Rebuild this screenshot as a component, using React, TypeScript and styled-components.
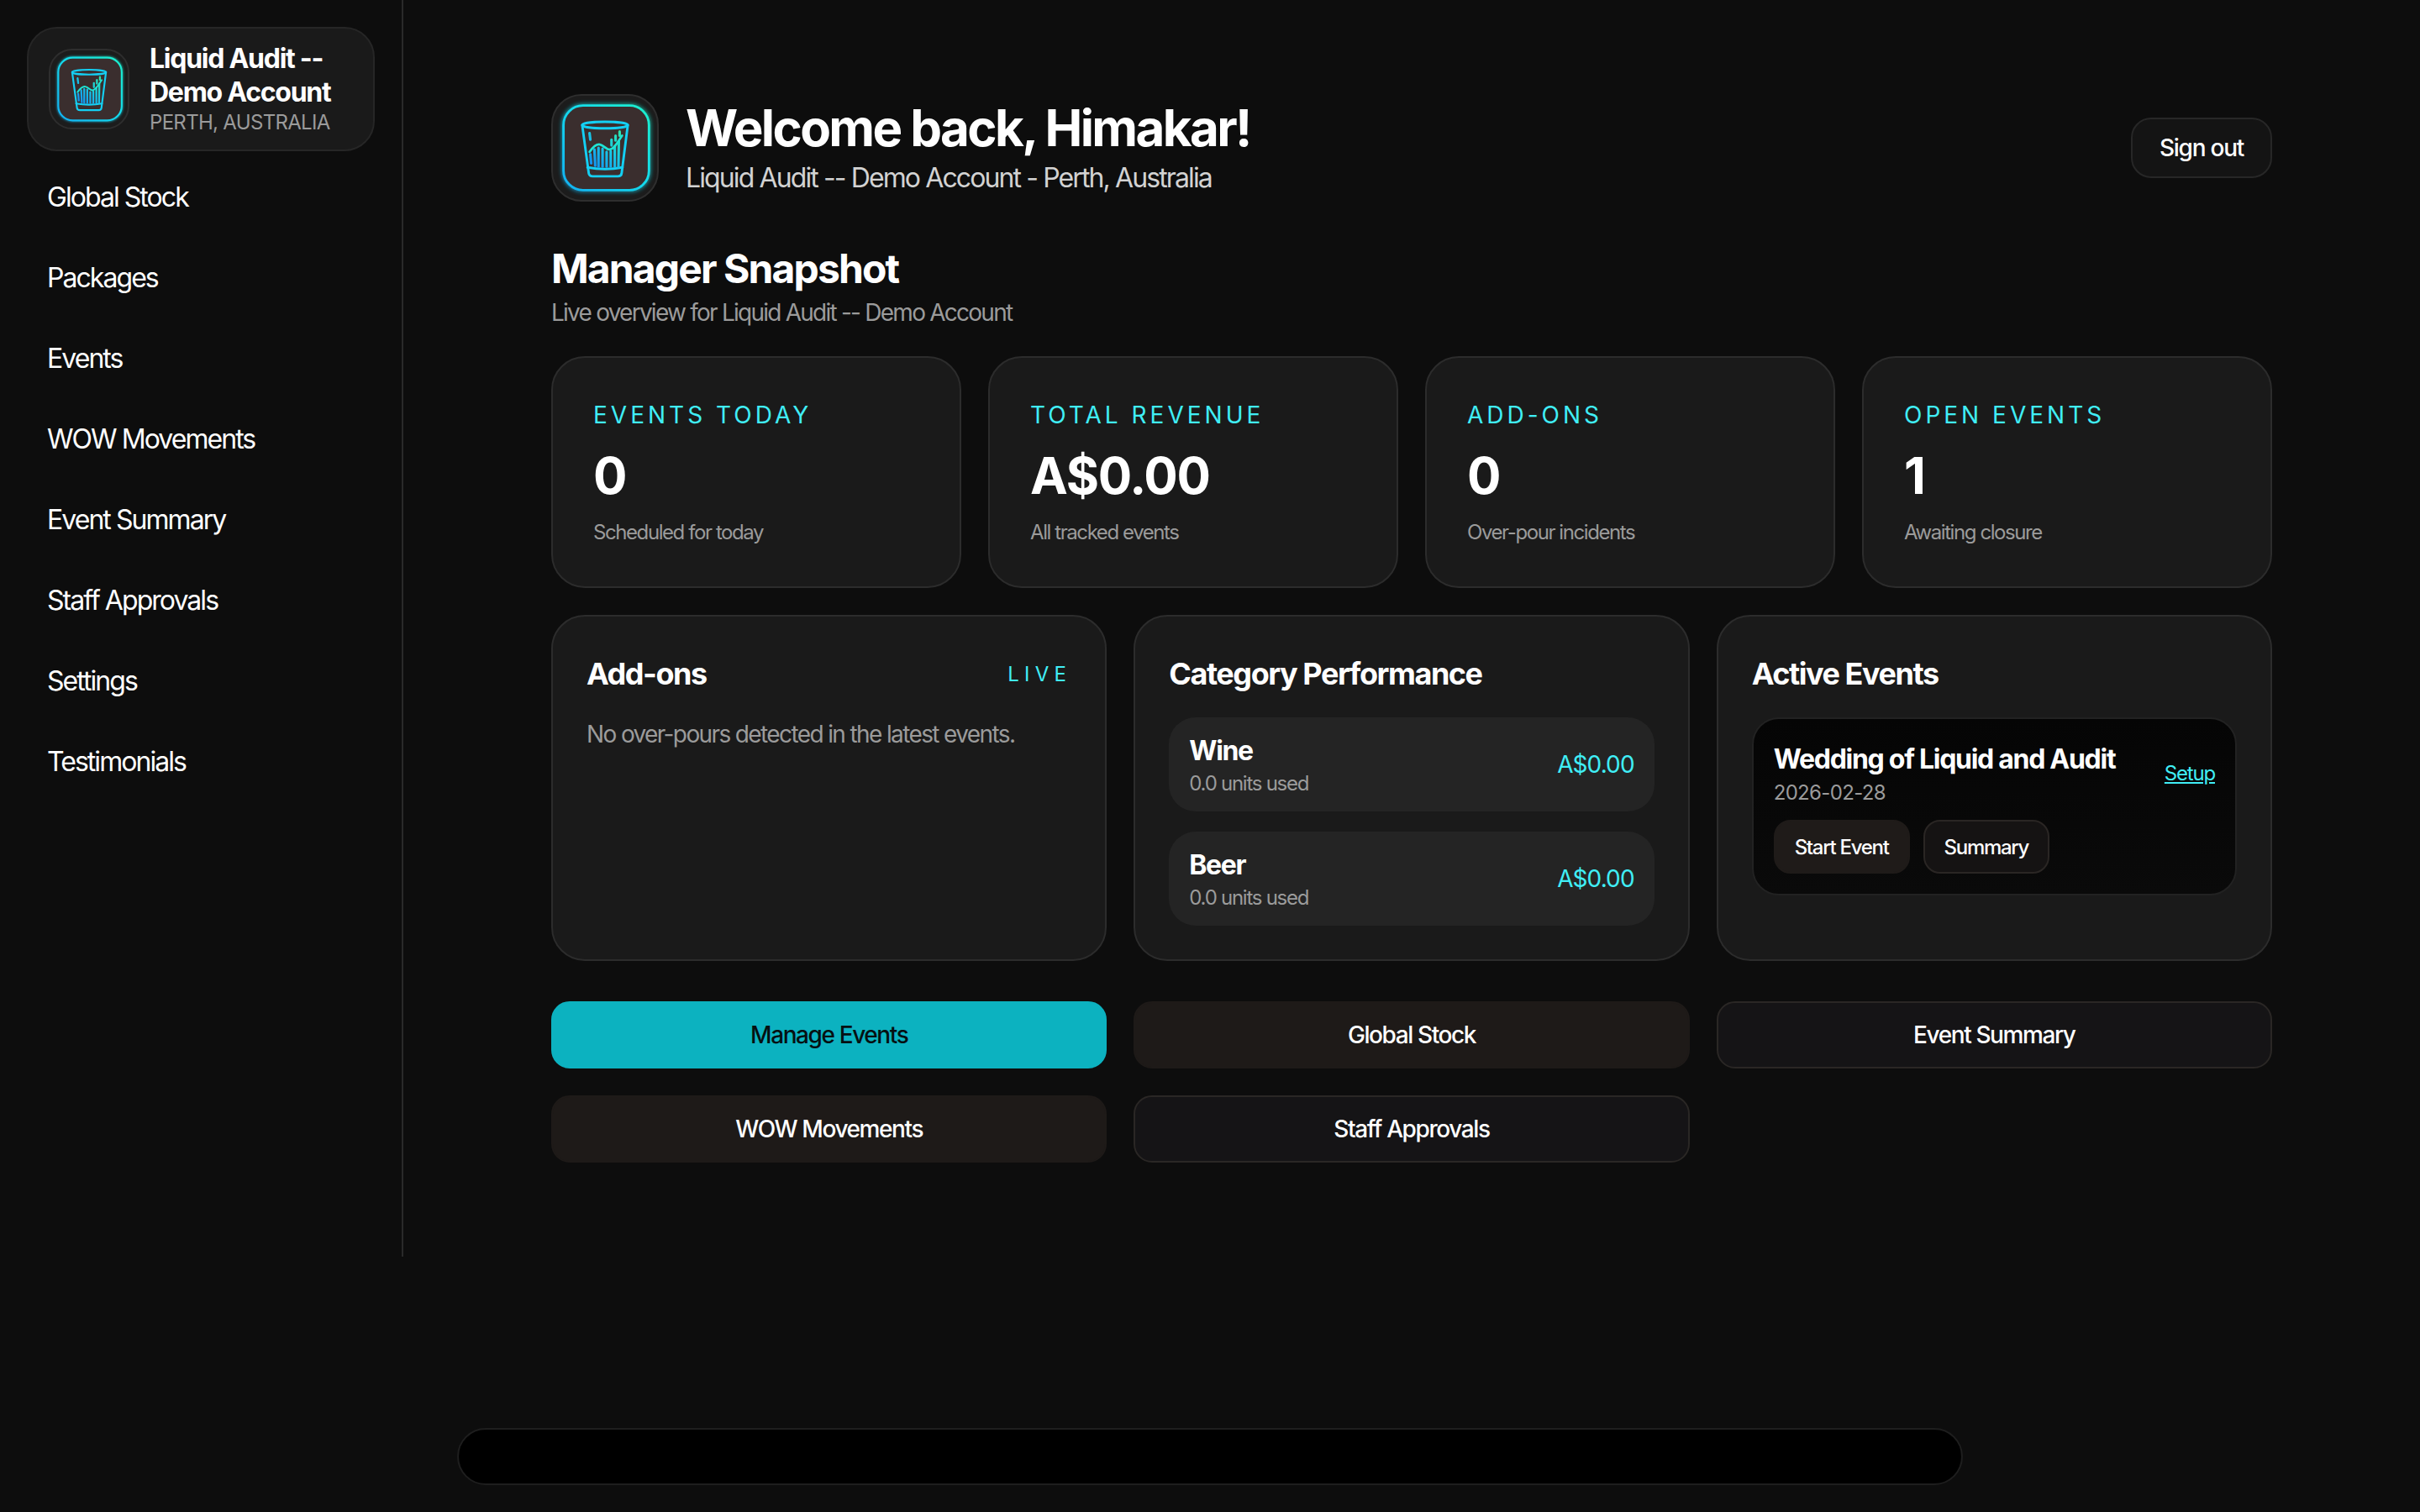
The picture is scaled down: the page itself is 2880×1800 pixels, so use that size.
import React from 'react'
import styled, { createGlobalStyle } from 'styled-components'

const CYAN = '#40eef6'
const MUTED = '#9b9b9b'

const GlobalStyle = createGlobalStyle`
  html, body {
    margin: 0;
    padding: 0;
    background: #0d0d0d;
    color: #fff;
    font-family: Inter, 'Liberation Sans', sans-serif;
  }
  * { box-sizing: border-box; }
`

const Page = styled.div`
  display: grid;
  grid-template-columns: 480px 1fr;
  align-items: start;
  min-height: 1800px;
`

const Sidebar = styled.aside`
  height: 1496px;
  padding: 32px 32px 0;
  border-right: 2px solid #2a2a2a;
`

const BrandCard = styled.div`
  display: flex;
  align-items: center;
  gap: 24px;
  width: 414px;
  padding: 16px 24px;
  background: #1a1a1a;
  border: 2px solid #262626;
  border-radius: 36px;
`

const LogoTile = styled.div<{ $size: number; $radius: number }>`
  flex: none;
  width: ${p => p.$size}px;
  height: ${p => p.$size}px;
  background: #1c1c1c;
  border: 2px solid #2e2e2e;
  border-radius: ${p => p.$radius}px;
  svg { display: block; width: 100%; height: 100%; }
`

const BrandName = styled.div`
  font-size: 32px;
  line-height: 40px;
  font-weight: 700;
  letter-spacing: -1.26px;
`

const BrandPlace = styled.div`
  font-size: 24px;
  line-height: 32px;
  letter-spacing: -0.69px;
  color: ${MUTED};
  text-transform: uppercase;
`

const Nav = styled.nav`
  display: flex;
  flex-direction: column;
  margin-top: 7px;
`

const NavItem = styled.a`
  padding: 24px 24px;
  font-size: 32px;
  line-height: 48px;
  letter-spacing: -1.95px;
  color: #fff;
`

const Main = styled.main`
  padding: 112px 176px 0;
`

const Header = styled.header`
  display: flex;
  align-items: center;
  gap: 32px;
`

const HeaderText = styled.div`
  flex: 1;
`

const Welcome = styled.h1`
  margin: 0;
  font-size: 60px;
  line-height: 72px;
  font-weight: 700;
  letter-spacing: -2.6px;
`

const Tagline = styled.div`
  font-size: 32px;
  line-height: 48px;
  letter-spacing: -1.89px;
  color: #d2d2d2;
`

const SignOut = styled.button`
  width: 168px;
  height: 72px;
  background: #141414;
  border: 2px solid #272727;
  border-radius: 24px;
  color: #fff;
  font: 500 28px Inter, sans-serif;
  letter-spacing: -1.26px;
`

const SectionTitle = styled.h2`
  margin: 48px 0 0;
  font-size: 48px;
  line-height: 64px;
  font-weight: 700;
  letter-spacing: -1.89px;
`

const SectionNote = styled.div`
  font-size: 28px;
  line-height: 40px;
  letter-spacing: -1.76px;
  color: ${MUTED};
`

const StatGrid = styled.div`
  display: grid;
  grid-template-columns: repeat(4, 1fr);
  gap: 32px;
  margin-top: 32px;
`

const Card = styled.section`
  background: #1a1a1a;
  border: 2px solid #2c2c2c;
  border-radius: 40px;
`

const StatCard = styled(Card)`
  padding: 48px;
`

const StatLabel = styled.div`
  font-size: 28px;
  line-height: 40px;
  letter-spacing: 4px;
  color: ${CYAN};
  text-transform: uppercase;
  white-space: nowrap;
`

const StatValue = styled.div`
  margin-top: 16px;
  font-size: 60px;
  line-height: 72px;
  font-weight: 700;
  letter-spacing: -1.2px;
`

const StatNote = styled.div`
  margin-top: 16px;
  font-size: 24px;
  line-height: 32px;
  letter-spacing: -1.42px;
  color: ${MUTED};
`

const PanelGrid = styled.div`
  display: grid;
  grid-template-columns: repeat(3, 1fr);
  gap: 32px;
  margin-top: 32px;
`

const Panel = styled(Card)`
  padding: 40px;
`

const PanelHead = styled.div`
  display: flex;
  align-items: center;
  justify-content: space-between;
`

const PanelTitle = styled.h3`
  margin: 0;
  font-size: 36px;
  line-height: 56px;
  font-weight: 700;
  letter-spacing: -1.45px;
`

const LiveTag = styled.span`
  font-size: 24px;
  letter-spacing: 6.300px;
  color: ${CYAN};
`

const EmptyNote = styled.p`
  margin: 24px 0 0;
  font-size: 28px;
  line-height: 40px;
  letter-spacing: -1.62px;
  color: ${MUTED};
`

const CategoryList = styled.div`
  display: flex;
  flex-direction: column;
  gap: 24px;
  margin-top: 24px;
`

const CategoryRow = styled.div`
  display: flex;
  align-items: center;
  justify-content: space-between;
  height: 112px;
  padding: 0 24px;
  background: #242424;
  border-radius: 32px;
`

const CategoryName = styled.div`
  font-size: 32px;
  line-height: 46px;
  font-weight: 700;
  letter-spacing: -1.4px;
`

const UnitsNote = styled.div`
  font-size: 24px;
  line-height: 32px;
  letter-spacing: -1.26px;
  color: ${MUTED};
`

const EventDate = styled.div`
  font-size: 24px;
  line-height: 32px;
  letter-spacing: -0.66px;
  color: ${MUTED};
`

const Amount = styled.div`
  font-size: 28px;
  letter-spacing: -0.9px;
  color: ${CYAN};
`

const EventCard = styled.div`
  display: flex;
  flex-direction: column;
  gap: 16px;
  margin-top: 24px;
  padding: 24px;
  background: linear-gradient(#050505, #0a0a0a);
  border: 2px solid #222;
  border-radius: 32px;
`

const EventTop = styled.div`
  display: flex;
  align-items: center;
  justify-content: space-between;
`

const EventName = styled.div`
  font-size: 32px;
  line-height: 48px;
  font-weight: 700;
  letter-spacing: -1.28px;
`

const SetupLink = styled.a`
  font-size: 24px;
  letter-spacing: -1.2px;
  color: ${CYAN};
  text-decoration: underline;
`

const EventActions = styled.div`
  display: flex;
  gap: 16px;
`

const SmallButton = styled.button<{ $outline?: boolean }>`
  height: 64px;
  padding: 0 23px;
  background: ${p => (p.$outline ? '#151313' : '#1f1b19')};
  border: 2px solid ${p => (p.$outline ? '#2a2624' : '#1f1b19')};
  border-radius: 20px;
  color: #fff;
  font: 500 24px Inter, sans-serif;
  letter-spacing: -1.3px;
`

const ActionGrid = styled.div`
  display: grid;
  grid-template-columns: repeat(3, 1fr);
  gap: 32px;
  margin-top: 48px;
`

const ActionButton = styled.button<{ $kind: 'primary' | 'filled' | 'outline' }>`
  height: 80px;
  border-radius: 22px;
  font: 500 28px Inter, sans-serif;
  letter-spacing: -1.4px;
  color: ${p => (p.$kind === 'primary' ? '#061012' : '#fff')};
  background: ${p => ({ primary: '#0cb2c0', filled: '#1e1a18', outline: '#151416' })[p.$kind]};
  border: 2px solid ${p => ({ primary: '#0cb2c0', filled: '#1e1a18', outline: '#2a2725' })[p.$kind]};
`

const BottomBar = styled.div`
  position: fixed;
  left: 544px;
  bottom: 32px;
  width: 1792px;
  height: 68px;
  background: #000;
  border: 2px solid #1e1e1e;
  border-radius: 34px;
`

const GlassLogo = () => (
  <svg viewBox="0 0 128 128" fill="none">
    <defs>
      <linearGradient id="glassFrame" x1="0" y1="1" x2="1" y2="0">
        <stop offset="0" stopColor="#12b0f2" />
        <stop offset="0.55" stopColor="#14dcec" />
        <stop offset="1" stopColor="#1cf0cc" />
      </linearGradient>
      <linearGradient id="glassBars" gradientUnits="userSpaceOnUse" x1="44" y1="88" x2="86" y2="44">
        <stop offset="0" stopColor="#1288f2" />
        <stop offset="0.55" stopColor="#18cce6" />
        <stop offset="1" stopColor="#2ee8a8" />
      </linearGradient>
      <filter id="glassGlow" x="-20%" y="-20%" width="140%" height="140%">
        <feGaussianBlur stdDeviation="2.5" />
      </filter>
    </defs>
    <rect x="13" y="12" width="105" height="104" rx="24" stroke="url(#glassFrame)" strokeWidth="4" filter="url(#glassGlow)" opacity="0.8" />
    <rect x="13" y="12" width="105" height="104" rx="24" fill="#3a2e2e" stroke="url(#glassFrame)" strokeWidth="3" />
    <g stroke="#14d0f4" strokeWidth="3" strokeLinecap="round" strokeLinejoin="round">
      <ellipse cx="64" cy="36" rx="28" ry="4" />
      <path d="M36 36 L44 95 Q44.500 99 49 99 L80 99 Q84 99 84.500 95 L92 36" />
      <path d="M42.500 88 Q64 92 85.500 88" />
    </g>
    <g stroke="url(#glassBars)" strokeWidth="3.2" strokeLinecap="round">
      <path d="M45 46 L46 54" />
      <path d="M46 72 L47 83" />
      <path d="M51 66 L52 86" />
      <path d="M56 64 L56 87" />
      <path d="M61 65 L61 87" />
      <path d="M66 69 L66 87" />
      <path d="M71 68 L71 87" />
      <path d="M76 62 L76 87" />
      <path d="M81 56 L80.500 87" />
      <path d="M72 54 L72 61" />
      <path d="M77 49 L77 55" />
      <path d="M82 44 L82 49" />
    </g>
    <path d="M45 69 C50 62 54 59 58 60 C63 61 66 67 70 66 C76 65 80 56 85 49" stroke="#1fe4d4" strokeWidth="2.8" strokeLinecap="round" />
  </svg>
)

const navItems = ['Global Stock', 'Packages', 'Events', 'WOW Movements', 'Event Summary', 'Staff Approvals', 'Settings', 'Testimonials']

const stats = [
  { label: 'Events today', value: '0', note: 'Scheduled for today' },
  { label: 'Total revenue', value: 'A$0.00', note: 'All tracked events' },
  { label: 'Add-ons', value: '0', note: 'Over-pour incidents' },
  { label: 'Open events', value: '1', note: 'Awaiting closure' },
]

const categories = ['Wine', 'Beer']

const actions: { label: string; kind: 'primary' | 'filled' | 'outline' }[] = [
  { label: 'Manage Events', kind: 'primary' },
  { label: 'Global Stock', kind: 'filled' },
  { label: 'Event Summary', kind: 'outline' },
  { label: 'WOW Movements', kind: 'filled' },
  { label: 'Staff Approvals', kind: 'outline' },
]

export default function App() {
  return (
    <Page>
      <GlobalStyle />
      <Sidebar>
        <BrandCard>
          <LogoTile $size={96} $radius={28}><GlassLogo /></LogoTile>
          <div>
            <BrandName>Liquid Audit -- Demo Account</BrandName>
            <BrandPlace>Perth, Australia</BrandPlace>
          </div>
        </BrandCard>
        <Nav>
          {navItems.map(item => <NavItem key={item}>{item}</NavItem>)}
        </Nav>
      </Sidebar>
      <Main>
        <Header>
          <LogoTile $size={128} $radius={36}><GlassLogo /></LogoTile>
          <HeaderText>
            <Welcome>Welcome back, Himakar!</Welcome>
            <Tagline>Liquid Audit -- Demo Account - Perth, Australia</Tagline>
          </HeaderText>
          <SignOut>Sign out</SignOut>
        </Header>

        <SectionTitle>Manager Snapshot</SectionTitle>
        <SectionNote>Live overview for Liquid Audit -- Demo Account</SectionNote>

        <StatGrid>
          {stats.map(s => (
            <StatCard key={s.label}>
              <StatLabel>{s.label}</StatLabel>
              <StatValue>{s.value}</StatValue>
              <StatNote>{s.note}</StatNote>
            </StatCard>
          ))}
        </StatGrid>

        <PanelGrid>
          <Panel>
            <PanelHead>
              <PanelTitle>Add-ons</PanelTitle>
              <LiveTag>LIVE</LiveTag>
            </PanelHead>
            <EmptyNote>No over-pours detected in the latest events.</EmptyNote>
          </Panel>
          <Panel>
            <PanelTitle>Category Performance</PanelTitle>
            <CategoryList>
              {categories.map(c => (
                <CategoryRow key={c}>
                  <div>
                    <CategoryName>{c}</CategoryName>
                    <UnitsNote>0.0 units used</UnitsNote>
                  </div>
                  <Amount>A$0.00</Amount>
                </CategoryRow>
              ))}
            </CategoryList>
          </Panel>
          <Panel>
            <PanelTitle>Active Events</PanelTitle>
            <EventCard>
              <EventTop>
                <div>
                  <EventName>Wedding of Liquid and Audit</EventName>
                  <EventDate>2026-02-28</EventDate>
                </div>
                <SetupLink>Setup</SetupLink>
              </EventTop>
              <EventActions>
                <SmallButton>Start Event</SmallButton>
                <SmallButton $outline>Summary</SmallButton>
              </EventActions>
            </EventCard>
          </Panel>
        </PanelGrid>

        <ActionGrid>
          {actions.map(a => <ActionButton key={a.label} $kind={a.kind}>{a.label}</ActionButton>)}
        </ActionGrid>
      </Main>
      <BottomBar />
    </Page>
  )
}
